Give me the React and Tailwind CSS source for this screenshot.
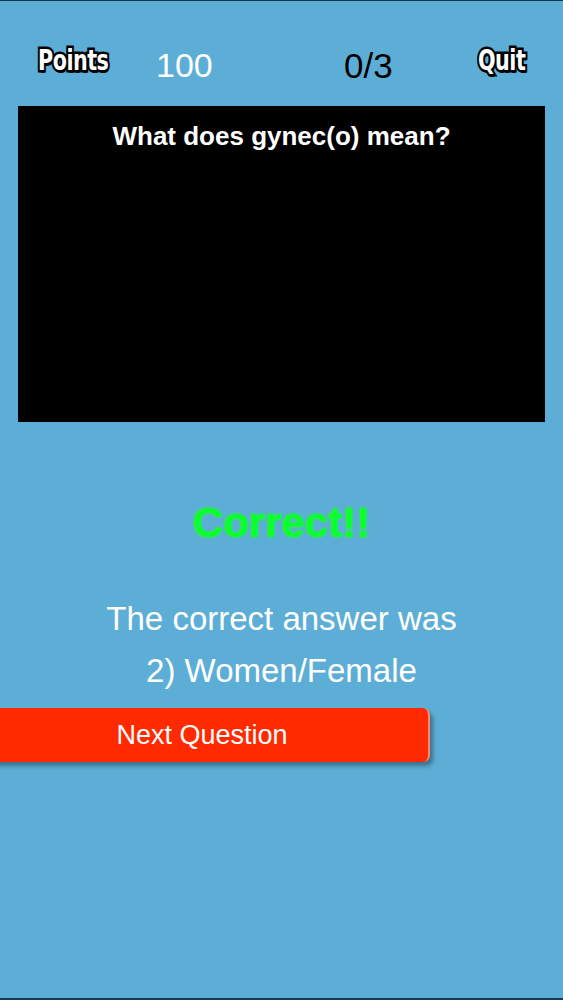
import React from "react";

function Outlined({ children, className = "" }) {
  // chunky cartoon label with black outline
  return (
    <span
      className={
        "inline-block origin-bottom scale-y-[1.22] font-bold text-white leading-none [paint-order:stroke_fill] [-webkit-text-stroke:4px_#000] [text-shadow:1px_2px_0_#000] " +
        className
      }
      style={{ fontFamily: '"DejaVu Sans Condensed", "DejaVu Sans", sans-serif' }}
    >
      {children}
    </span>
  );
}

export default function App() {
  const sans = { fontFamily: '"Liberation Sans", Arial, sans-serif' };

  return (
    <div className="min-h-[1000px] w-[563px] bg-[#5daed6] border-t border-[#1b2f4a] border-b-2 border-b-[#1b3a55] overflow-hidden" style={sans}>
      {/* top bar */}
      <div className="flex items-center h-[105px] pt-[14px]">
        <div className="w-[156px] pl-[38px] pt-[8px]">
          <Outlined className="text-[23px] tracking-[-0.5px]">Points</Outlined>
        </div>
        <div className="w-[188px] text-[34px] text-white leading-none pt-[9px]">100</div>
        <div className="w-[134px] text-[35px] text-black leading-none pt-[9px]">0/3</div>
        <div className="pt-[8px]">
          <Outlined className="text-[23px] tracking-[-0.5px]">Quit</Outlined>
        </div>
      </div>

      {/* question panel */}
      <div className="ml-[18px] w-[527px] h-[316px] bg-black pt-[15px]">
        <p className="text-center text-white font-bold text-[26px] leading-[30px]">What does gynec(o) mean?</p>
      </div>

      {/* result */}
      <div className="pt-[77px] text-center">
        <p className="text-[42px] font-bold text-[#0bff2a] leading-[48px] [text-shadow:0_0_3px_#22ff33]">Correct!!</p>
        <p className="mt-[52px] text-[33px] text-white leading-[40px]">The correct answer was</p>
        <p className="mt-[12px] text-[33px] text-white leading-[40px]">2) Women/Female</p>
      </div>

      {/* next button, runs off the left edge */}
      <div className="mt-[17px] ml-[-24px] w-[454px] h-[54px] rounded-[7px] bg-[#ff2a00] shadow-[3px_4px_4px_rgba(0,0,0,0.35)] border-r-2 border-r-[#ff8a70] flex items-center justify-center">
        <span className="text-white text-[27px]">Next Question</span>
      </div>
    </div>
  );
}
